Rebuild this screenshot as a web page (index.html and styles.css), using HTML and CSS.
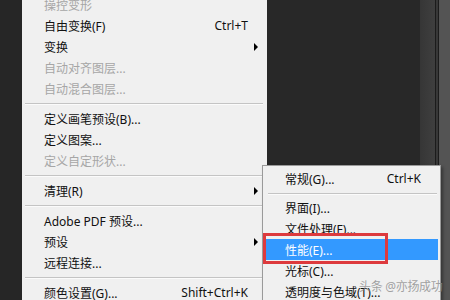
FILE: index.html
```html
<!DOCTYPE html>
<html lang="zh-CN">
<head>
<meta charset="utf-8">
<title>Photoshop 编辑菜单</title>
<link rel="stylesheet" href="styles.css">
</head>
<body>
<div class="screen">
  <div class="left-strip"></div>
  <div class="menu">
    <div class="item disabled"><span class="label">操控变形</span></div>
    <div class="item"><span class="label">自由变换(F)</span><span class="key">Ctrl+T</span><span class="arrow-cell"></span></div>
    <div class="item"><span class="label">变换</span><span class="arrow-cell"><i class="arrow"></i></span></div>
    <div class="item disabled"><span class="label">自动对齐图层...</span></div>
    <div class="item disabled"><span class="label">自动混合图层...</span></div>
    <div class="sep"></div>
    <div class="item"><span class="label">定义画笔预设(B)...</span></div>
    <div class="item"><span class="label">定义图案...</span></div>
    <div class="item disabled"><span class="label">定义自定形状...</span></div>
    <div class="sep"></div>
    <div class="item"><span class="label">清理(R)</span><span class="arrow-cell"><i class="arrow"></i></span></div>
    <div class="sep"></div>
    <div class="item"><span class="label">Adobe PDF 预设...</span></div>
    <div class="item"><span class="label">预设</span><span class="arrow-cell"><i class="arrow"></i></span></div>
    <div class="item"><span class="label">远程连接...</span></div>
    <div class="sep"></div>
    <div class="item"><span class="label">颜色设置(G)...</span><span class="key">Shift+Ctrl+K</span><span class="arrow-cell"></span></div>
  </div>
  <div class="workspace"></div>
  <div class="panel-edge"></div>
  <div class="panel-line"></div>
  <div class="panel-mid"></div>
  <div class="panel-line"></div>
  <div class="panel"></div>

  <div class="submenu">
    <div class="item"><span class="label">常规(G)...</span><span class="key">Ctrl+K</span></div>
    <div class="sep"></div>
    <div class="item"><span class="label">界面(I)...</span></div>
    <div class="item"><span class="label">文件处理(F)...</span></div>
    <div class="item active"><span class="label">性能(E)...</span></div>
    <div class="item"><span class="label">光标(C)...</span></div>
    <div class="item"><span class="label">透明度与色域(T)...</span></div>
  </div>
  <div class="mark-box"></div>
  <div class="watermark">头条 @亦扬成功</div>
</div>
</body>
</html>
```

FILE: styles.css
```css
html, body {
  margin: 0;
  padding: 0;
}

body {
  width: 450px;
  height: 300px;
  overflow: hidden;
  background: #282828;
  font-family: "Noto Sans", "Noto Sans CJK SC", sans-serif;
  font-size: 12px;
  color: #111;
}

.screen {
  position: relative;
  display: flex;
  width: 450px;
  height: 300px;
  overflow: hidden;
}

.left-strip {
  width: 22px;
  flex: none;
  background: #262626;
}

.menu {
  width: 245px;
  flex: none;
  margin-top: -6px;
  background: #f0f0f0;
  display: flex;
  flex-direction: column;
}

.item {
  height: 21px;
  display: flex;
  align-items: center;
  padding-left: 22px;
  white-space: nowrap;
  flex: none;
}

.item .label {
  flex: 1;
}

.item .key {
  text-align: right;
}

.menu .item:not(:has(.arrow-cell)) {
  padding-right: 19px;
}

.arrow-cell {
  width: 19px;
  height: 21px;
  display: flex;
  align-items: center;
  padding-left: 6px;
  box-sizing: border-box;
}

.arrow {
  display: block;
  width: 0;
  height: 0;
  border-left: 4px solid #000;
  border-top: 4px solid transparent;
  border-bottom: 4px solid transparent;
}

.disabled {
  color: #a6a6a6;
}

.sep {
  height: 9px;
  flex: none;
  display: flex;
  align-items: center;
  padding: 0 4px 0 3px;
}

.sep::before {
  content: "";
  display: block;
  width: 100%;
  height: 1px;
  background: #c4c4c4;
  box-shadow: 0 1px 0 #fbfbfb;
}

.workspace {
  width: 153px;
  flex: none;
  background: #282828;
}

.panel-edge {
  width: 15px;
  flex: none;
  background: linear-gradient(to right, #363636, #3f3f3f);
}

.panel-line {
  width: 1px;
  flex: none;
  background: #1c1c1c;
}

.panel-mid {
  width: 2px;
  flex: none;
  background: #383838;
}

.panel {
  flex: 1;
  background: #545454;
}

.submenu {
  position: absolute;
  left: 262px;
  top: 165px;
  width: 177px;
  height: 140px;
  background: #f0f0f0;
  border: 1px solid #9a9a9a;
  padding-top: 2px;
  box-shadow: 2px 2px 3px rgba(0, 0, 0, 0.35);
  display: flex;
  flex-direction: column;
}

.submenu .item {
  padding-right: 17px;
  margin: 0 2px;
  padding-left: 20px;
}

.submenu .sep {
  padding: 0 3px 0 5px;
  height: 8px;
}

.submenu .item.active {
  background: #3399ff;
  color: #fff;
}

.mark-box {
  position: absolute;
  left: 263px;
  top: 233px;
  width: 119px;
  height: 25px;
  border: 3px solid #dd3a3d;
}

.watermark {
  position: absolute;
  left: 359px;
  top: 277px;
  font-size: 12px;
  letter-spacing: -0.3px;
  color: rgba(140, 140, 140, 0.8);
  white-space: nowrap;
}
```
